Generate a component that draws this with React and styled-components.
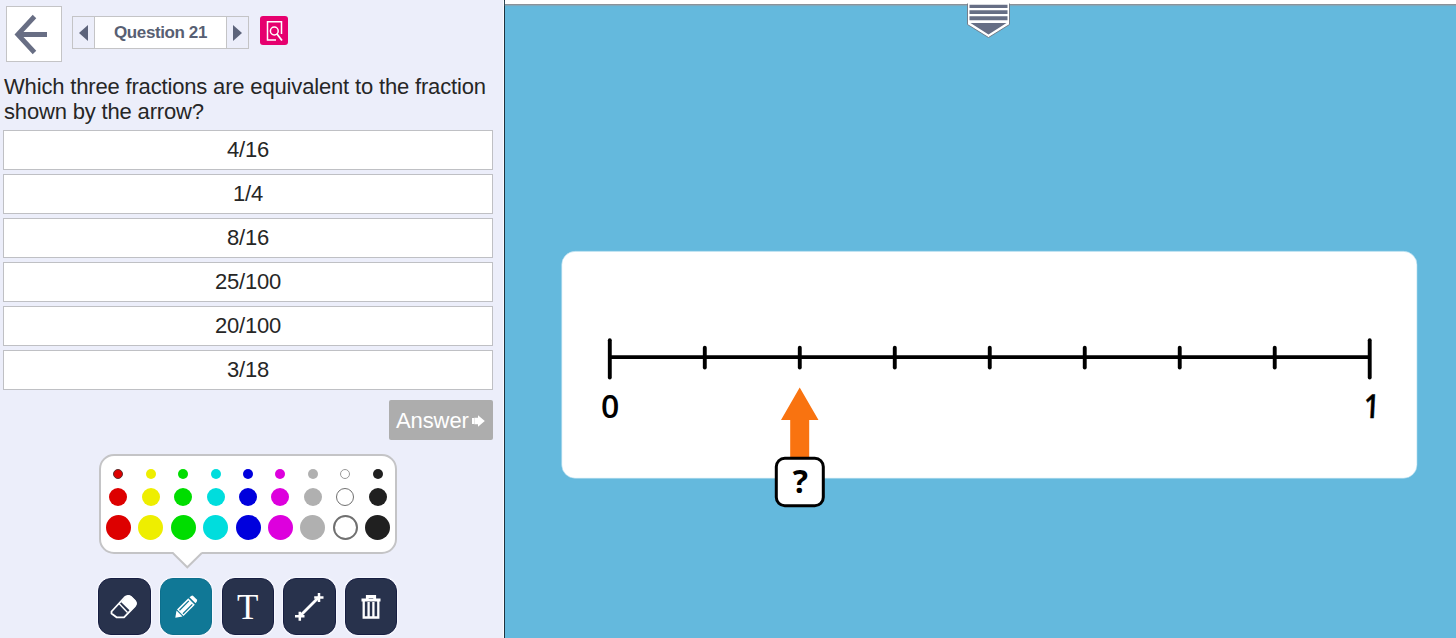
import styled, { createGlobalStyle } from "styled-components"

const options = ['4/16', '1/4', '8/16', '25/100', '20/100', '3/18']

const penColors = ['#dd0000', '#eeee00', '#00dd00', '#00dddd', '#0000dd', '#dd00dd', '#b0b0b0', '#ffffff', '#202020']
const penRows = [
    { size: 10, gap: 9 },
    { size: 18, gap: 9 },
    { size: 25, gap: 0 },
]

const ticks = [0, 1, 2, 3, 4, 5, 6, 7, 8]

const GlobalStyle = createGlobalStyle`
    * {
        box-sizing: border-box;
    }

    body {
        margin: 0;
        overflow: hidden;
        font-family: "Liberation Sans", Arial, sans-serif;
    }
`

const Page = styled.div`
    display: flex;
    width: 1456px;
    height: 638px;
`

const Sidebar = styled.div`
    width: 505px;
    height: 638px;
    background-color: #eceefa;
    border-right: 1px solid #1f3340;
    box-shadow: inset -1px 0 0 #fafbff;
`

const Header = styled.div`
    display: flex;
    align-items: flex-start;
    height: 73px;
    padding: 6px 0 0 6px;
`

const BackButton = styled.button`
    width: 56px;
    height: 56px;
    padding: 0;
    background-color: #ffffff;
    border: 1px solid #c4c4c6;
`

const QuestionNav = styled.div`
    display: flex;
    width: 177px;
    height: 33px;
    margin: 10px 0 0 10px;
    border: 1px solid #c4c4c6;
`

const NavArrow = styled.button`
    display: flex;
    align-items: center;
    justify-content: center;
    width: 21px;
    padding: 0;
    border: none;
    background-color: #eceefa;
`

const QuestionTitle = styled.div`
    flex: 1;
    background-color: #ffffff;
    border-left: 1px solid #c4c4c6;
    border-right: 1px solid #c4c4c6;
    color: #585f73;
    font-size: 17px;
    font-weight: bold;
    line-height: 32px;
    letter-spacing: -0.4px;
    text-align: center;
`

const LookupButton = styled.button`
    width: 28px;
    height: 29px;
    margin: 10px 0 0 11px;
    padding: 0;
    border: none;
    border-radius: 3px;
    background-color: #e6006e;
`

const QuestionText = styled.p`
    height: 57px;
    margin: 0;
    padding: 1px 0 0 4px;
    color: #262626;
    font-size: 22px;
    line-height: 25px;
    letter-spacing: -0.165px;
    white-space: nowrap;
`

const OptionList = styled.div`
    display: flex;
    flex-direction: column;
    gap: 4px;
    width: 490px;
    margin-left: 3px;
`

const Option = styled.button`
    height: 40px;
    padding: 0;
    background-color: #ffffff;
    border: 1px solid #bfc0c4;
    color: #262626;
    font-family: inherit;
    font-size: 22px;
    letter-spacing: -0.25px;
`

const AnswerRow = styled.div`
    display: flex;
    justify-content: flex-end;
    width: 493px;
    padding-top: 10px;
`

const AnswerButton = styled.button`
    display: flex;
    align-items: center;
    gap: 3px;
    width: 104px;
    height: 40px;
    padding: 1px 0 0 7px;
    border: none;
    border-radius: 2px;
    background-color: #adadad;
    color: #ffffff;
    font-family: inherit;
    font-size: 22px;
    letter-spacing: -0.1px;
`

const Palette = styled.div`
    position: relative;
    width: 298px;
    height: 100px;
    margin: 14px 0 0 99px;
    padding: 13px 4px 0;
    background-color: #ffffff;
    border: 2px solid #c4c4c6;
    border-radius: 15px;
`

const PaletteTail = styled.svg`
    position: absolute;
    left: 70px;
    top: 95px;
`

const PenRow = styled.div`
    display: grid;
    grid-template-columns: repeat(9, 32.45px);
    justify-content: center;
    justify-items: center;
    margin-bottom: ${(props) => props.$gap}px;
`

const Pen = styled.div`
    width: ${(props) => props.$size}px;
    height: ${(props) => props.$size}px;
    border-radius: 50%;
    background-color: ${(props) => props.$color};
    border: ${(props) => props.$border || 'none'};
`

const Toolbar = styled.div`
    display: flex;
    justify-content: space-between;
    width: 299px;
    margin: 24px 0 0 98.3px;
`

const Tool = styled.button`
    display: flex;
    align-items: center;
    justify-content: center;
    width: 52.4px;
    height: 57px;
    padding: 1px 0 0;
    border: 1px solid ${(props) => (props.$active ? '#0d6f8d' : '#171e42')};
    border-radius: 13px;
    background-color: ${(props) => (props.$active ? '#107896' : '#28324c')};
    box-shadow: 0 0 1px 1px #f8f9ff;
    color: #ffffff;
    font-family: "Liberation Serif", "Times New Roman", serif;
    font-size: 35px;
    line-height: 1;
`

const Board = styled.div`
    display: flex;
    flex-direction: column;
    align-items: center;
    width: 951px;
    height: 638px;
    background-color: #64b9dd;
`

const TopStrip = styled.div`
    display: flex;
    justify-content: center;
    width: 100%;
    height: 5px;
    padding-left: 14px;
    background-color: #ffffff;
    border-bottom: 1px solid #8b9299;
    box-shadow: 0 1px 1px #7fa9bd;
`

const PullTab = styled.svg`
    position: relative;
    flex: none;
`

const NumberLine = styled.svg`
    margin-top: 245px;
    margin-left: 17px;
    font-family: "Open Sans", "Noto Sans", sans-serif;
    font-size: 33px;
    font-weight: 600;
`

function getPenBorder(color, size) {
    if (color === '#ffffff') {
        return size === 10 ? '1px solid #999' : `${size === 25 ? 2 : 1.5}px solid #707070`
    }
    // currently selected pen
    if (color === '#dd0000' && size === 10) {
        return '1px solid #5c3030'
    }
    return null
}

function PenPalette() {
    return (
        <Palette>
            {penRows.map(({ size, gap }) => (
                <PenRow key={size} $gap={gap}>
                    {penColors.map((color) => (
                        <Pen key={color} $size={size} $color={color} $border={getPenBorder(color, size)} />
                    ))}
                </PenRow>
            ))}
            <PaletteTail width="34" height="20" viewBox="0 0 34 20">
                <path d="M2.5 0H30.5V2L16.5 16L2.5 2Z" fill="#fff" />
                <path d="M1.8 2L16.3 16.3L30.8 2" fill="none" stroke="#c4c4c6" strokeWidth="1.9" />
            </PaletteTail>
        </Palette>
    )
}

function EraserIcon() {
    return (
        <svg width="30" height="28" viewBox="0 0 30 28">
            <path d="M2.5 18.5L15.5 4.500Q18.500 1.500 22 4L26 8Q28 10.500 26 13L15 24.300H7.500L2.500 20.500Z" fill="none" stroke="#fff" strokeWidth="1.800" strokeLinejoin="round" />
            <path d="M12 9L16.500 4Q19.500 1 22.500 3.500L27 8Q28.500 11 26 13.500L21.500 18.200Z" fill="#fff" />
            <path d="M10 10.500L18.500 19.500" stroke="#fff" strokeWidth="1.400" />
        </svg>
    )
}

function PencilIcon() {
    return (
        <svg width="24" height="24" viewBox="0 0 24 24">
            <path d="M1.3 22.800L2.500 15.500L8.500 21.500Z" fill="#fff" />
            <path d="M3 14.500L14.300 3.200L20.800 9.700L9.500 21Z" fill="#fff" />
            <path d="M5.500 15.200L14.800 5.900M9 18.700L18.300 9.400" stroke="#107896" strokeWidth="1.300" />
            <path d="M15.500 2.300L17.200 .9Q18.500 .2 19.500 1.200L22.800 4.500Q23.500 5.500 22.700 6.700L21.500 8.300Z" fill="#fff" />
            <path d="M14.600 2.800L21.200 9.400" stroke="#107896" strokeWidth="0.700" />
        </svg>
    )
}

function LineIcon() {
    return (
        <svg width="30" height="30" viewBox="0 0 30 30">
            <path d="M6 24L24.500 5.500" stroke="#fff" strokeWidth="2.800" />
            <path d="M1 24.300H10.500M5.800 19.800V28.800M20.200 5.500H29.500M25 1V10" stroke="#fff" strokeWidth="2.500" />
        </svg>
    )
}

function TrashIcon() {
    return (
        <svg width="20" height="24" viewBox="0 0 20 24">
            <path d="M0.500 5H19.500M6.300 4.500V1.500H13.700V4.500" fill="none" stroke="#fff" strokeWidth="2.800" />
            <path d="M2.700 6V22.500H17.300V6M7.600 7V22M12.400 7V22" fill="none" stroke="#fff" strokeWidth="2.300" />
        </svg>
    )
}

function FractionLine() {
    return (
        <NumberLine width="858" height="260" viewBox="560 250 858 260">
            <rect x="561.700" y="251.300" width="855.300" height="227" rx="13.500" fill="#fff" stroke="#a9d9ec" strokeWidth="0.600" />
            <path d="M609.800 357.200H1369.700" stroke="#000" strokeWidth="3.800" />
            {ticks.map((tick) => {
                const x = 609.8 + tick * 94.99
                const isEnd = tick % 8 === 0
                return (
                    <line
                        key={tick}
                        x1={x}
                        x2={x}
                        y1={isEnd ? 340.2 : 347.8}
                        y2={isEnd ? 377.5 : 367.5}
                        stroke="#000"
                        strokeWidth="3.900"
                        strokeLinecap="round"
                    />
                )
            })}
            <text transform="translate(610.200 417.500) scale(0.97 1)" textAnchor="middle">0</text>
            <text transform="translate(1371 417.500) skewX(-3) scale(0.82 1)" textAnchor="middle" stroke="#000" strokeWidth="0.500">1</text>
            <path d="M799.700 387.500L818.500 420H809.200V459H790.200V420H781Z" fill="#f97310" />
            <rect x="776.300" y="458.300" width="47" height="47.500" rx="8.500" fill="#fff" stroke="#000" strokeWidth="3" />
            <text x="800.500" y="493" textAnchor="middle" fontWeight="700" fontSize="32">?</text>
        </NumberLine>
    )
}

function App() {
    return (
        <Page>
            <GlobalStyle />
            <Sidebar>
                <Header>
                    <BackButton>
                        <svg width="54" height="54" viewBox="0 0 54 54">
                            <path d="M27.500 9.500L10.800 27.500L27.500 45.500M12 27.500H40" fill="none" stroke="#686e84" strokeWidth="4.800" />
                        </svg>
                    </BackButton>
                    <QuestionNav>
                        <NavArrow>
                            <svg width="9" height="16" viewBox="0 0 9 16"><path d="M9 0V16L0 8Z" fill="#5d647b" /></svg>
                        </NavArrow>
                        <QuestionTitle>Question 21</QuestionTitle>
                        <NavArrow>
                            <svg width="9" height="16" viewBox="0 0 9 16"><path d="M0 0V16L9 8Z" fill="#5d647b" /></svg>
                        </NavArrow>
                    </QuestionNav>
                    <LookupButton>
                        <svg width="28" height="29" viewBox="0 0 28 29" fill="none" stroke="#fff">
                            <path d="M16 24H7.500V5.700H21.500V18" strokeWidth="1.500" />
                            <circle cx="14.300" cy="15" r="3.900" strokeWidth="1.500" />
                            <path d="M17 18L22 24.500" strokeWidth="1.800" />
                        </svg>
                    </LookupButton>
                </Header>
                <QuestionText>
                    Which three fractions are equivalent to the fraction<br />
                    shown by the arrow?
                </QuestionText>
                <OptionList>
                    {options.map((option) => (
                        <Option key={option}>{option}</Option>
                    ))}
                </OptionList>
                <AnswerRow>
                    <AnswerButton>
                        Answer
                        <svg width="13" height="12" viewBox="0 0 13 12"><path d="M0 3H2V9H0ZM2.300 2.800H6V0.300L12.800 6L6 11.700V9.200H2.300Z" fill="#fff" /></svg>
                    </AnswerButton>
                </AnswerRow>
                <PenPalette />
                <Toolbar>
                    <Tool><EraserIcon /></Tool>
                    <Tool $active><PencilIcon /></Tool>
                    <Tool>T</Tool>
                    <Tool><LineIcon /></Tool>
                    <Tool><TrashIcon /></Tool>
                </Toolbar>
            </Sidebar>
            <Board>
                <TopStrip>
                    <PullTab width="44" height="39" viewBox="0 0 44 39">
                        <path d="M1.500 0V24.500L22.500 37.500L43.500 24.500V0Z" fill="#fff" stroke="#6c7480" strokeWidth="0.900" />
                        <path d="M0 0H44V3.500H0Z" fill="#fff" />
                        <path d="M3.500 4.700H41.500V8H3.500ZM3.500 10.300H41.500V14H3.500ZM3.500 16.300H41.500V20.200H3.500ZM4.500 23H40.500L22.500 34.500Z" fill="#666e85" />
                    </PullTab>
                </TopStrip>
                <FractionLine />
            </Board>
        </Page>
    )
}

export default App
